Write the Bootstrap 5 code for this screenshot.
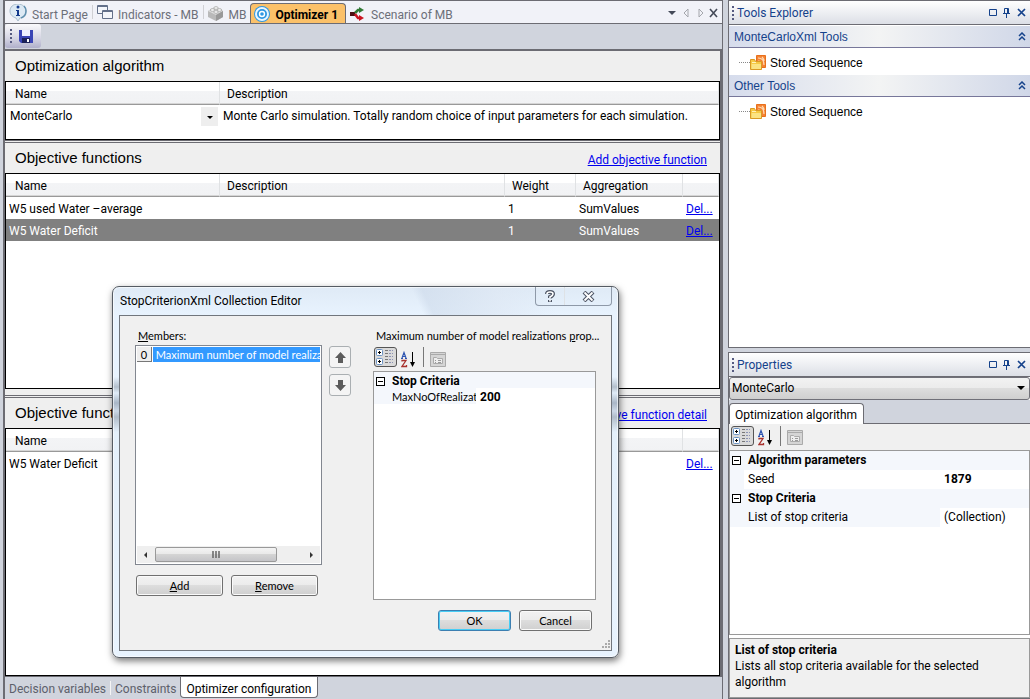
<!DOCTYPE html>
<html lang="en">
<head>
<meta charset="utf-8">
<meta name="viewport" content="width=device-width, initial-scale=1">
<title>Optimizer 1</title>
<link href="https://cdn.jsdelivr.net/npm/bootstrap@5.3.0/dist/css/bootstrap.min.css" rel="stylesheet">
<style>
:root{--ui:Roboto,"Open Sans",sans-serif;--ari:"Liberation Sans",Arial,sans-serif;--edge:#6c6c73;--chrome:#d0d4dd}
html,body{height:100%}
body{font:12px/16px var(--ui);color:#000;background:var(--chrome)}
svg{display:block;flex:none}
button,select{font:inherit;color:inherit;border:0;background:none;padding:0;margin:0}
a{color:#00e;}
.shell{min-height:100vh;position:relative}
.work{border-left:2px solid var(--edge);margin-left:3px;min-width:0}
.side{width:302px;flex:none}
.splitter{width:6px;flex:none;background:var(--chrome);border-left:1px solid var(--edge);box-sizing:border-box}
/* document tabs */
.doctabs{height:24px;background:#f1f2f8;border-top:1px solid var(--edge);border-bottom:1px solid var(--edge);color:#6c6f78}
.doctabs .doc{height:22px;gap:5px;padding:3px 4px 0;white-space:nowrap}
.doctabs .doc>span{padding-top:3px}
.doctabs .split{border-right:1px solid #d0d0d4;height:14px;align-self:center}
.doctabs .doc.on{background:#fbc169;color:#000;font-weight:700;border:1px solid #6c6c73;border-bottom:0;border-radius:4px 4px 0 0;margin-top:2px;height:20px;padding:1px 7px 0 3px}
.doctabs .doc.on>span{padding-top:2px}
.tools{height:27px;border-bottom:2px solid var(--edge);background:var(--chrome)}
.savebar{background:linear-gradient(#fafafc,#d5d5e3 60%,#b0b0cb);border-radius:3px;width:36px;height:24px;padding:0 7px 0 5px}
.grip{width:2px;height:14px;background:repeating-linear-gradient(#555a80 0 2px,transparent 2px 4px)}
/* sections */
.sections{border-right:2px solid var(--edge);background:#efefef}
.sechead{height:30px;padding:0 13px 0 10px}
.sechead h2{font:15px/20px var(--ari);margin:0}
.secrule{height:3px;border:solid var(--edge);border-width:1px 0}
.secrule.wide{margin-top:6px}
.gridbox{border:1px solid #000;background:#fff;overflow:hidden}
.gridbox table{width:100%;table-layout:fixed;border-collapse:separate;border-spacing:0}
.gridbox th{height:23px;font-weight:400;padding:2px 8px 0 7px;border-right:1px solid #e0e2e4;border-bottom:1px solid #999;background:linear-gradient(#fff 40%,#f3f4f6 40%,#f1f2f4);box-shadow:inset 0 -1px #d5d5d5}
.gridbox th:first-child{padding-left:9px}
.gridbox td{height:22px;padding:1px 3px 0;white-space:nowrap;overflow:hidden}
.gridbox tr.sel td{background:#808080;color:#fff}
.gridbox td:last-child{padding-right:0}
.gridbox tr.pick td{padding-top:0}
.gridbox tr.pick td:first-child{padding-right:2px}
.w-name{width:214px}.w-wt{width:71px}.w-ag{width:107px}.w-del{width:36px}
.algo{appearance:none;width:100%;height:20px;padding-left:1px;background:url("data:image/svg+xml,%3Csvg xmlns='http://www.w3.org/2000/svg' width='17' height='19'%3E%3Cpath fill='%23eee' d='M0 0h17v19H0z'/%3E%3Cpath d='M6 9h6l-3 3z'/%3E%3C/svg%3E") no-repeat right center}
.bottabs{height:23px;border-top:1px solid var(--edge);color:#5d606b}
.bottabs button{padding:3px 4px 0;height:21px;white-space:nowrap}
.bottabs button.on{background:#fff;color:#000;border:1px solid var(--edge);border-top:0;border-radius:0 0 4px 4px;padding:3px 6px 0 5px}
.bottabs i{width:1px;height:14px;background:#f5f5f5;margin:4px 0 0}
/* docked panels */
.dock{border:1px solid var(--edge);border-right:0;background:#fff;min-height:0}
.dockhead{height:24px;background:linear-gradient(#fff,#dcdfe6);border-bottom:1px solid var(--edge);padding:1px 4px 0 3px;color:#15428b}
.dockhead .grip{margin-right:3px}
.grouphead{height:22px;padding:1px 4px 0 5px;font:12px/20px var(--ari);color:#15428b;background:linear-gradient(90deg,#d6dcec,#f3f4f4 50%,#d0d7e8);border-bottom:1px solid #77779a}
.leaf{height:27px;padding:2px 0 0 10px;font:12px/20px var(--ari)}
.dots{width:11px;border-top:1px dotted #888}
.objsel{appearance:none;height:23px;border:1px solid #707078;border-radius:3px;padding:0 2px;background:url("data:image/svg+xml,%3Csvg xmlns='http://www.w3.org/2000/svg' width='14' height='8'%3E%3Cpath d='M2 2h8l-4 4z'/%3E%3C/svg%3E") no-repeat right center,linear-gradient(#f2f2f2,#ebebeb 50%,#ddd 50%,#cfcfcf)}
.ptabs{background:var(--chrome);padding-top:3px;border-bottom:1px solid var(--edge)}
.ptabs button{background:#fff;border:1px solid var(--edge);border-bottom:0;border-radius:4px 4px 0 0;padding:3px 6px 1px 5px;height:21px;margin-bottom:-1px}
.pbar{background:#f0f0f0;height:26px;padding:2px 2px 0}
.pbar .cat{border:1px solid #555;border-radius:3px;background:#dadada;width:23px;height:20px;padding:0 1px}
.pbar .rule{width:1px;height:20px;background:#777;margin:0 6px 0 5px}
.pgrid{border:1px solid #999;background:#fff}
.pgrid .r{display:grid;grid-template-columns:14px 1fr 89px;height:19px;line-height:18px}
.pgrid .r>*{padding-left:4px;white-space:nowrap;overflow:hidden}
.pgrid .t{background:#f4f7fc}
.minus{width:9px;height:9px;border:1px solid #000;background:linear-gradient(#000,#000) center/5px 1px no-repeat #fff;padding:0!important;margin:5px 0 0 2px}
.helpbox{border:1px solid #999;background:#f0f0f0;margin-top:3px;height:60px;padding:3px 5px}
/* dialog */
.dlg{position:absolute;left:112px;top:286px;width:507px;height:372px;border:1px solid #555b63;border-radius:7px;padding:0 6px 6px;background:linear-gradient(65deg,transparent 0 60%,#c9d6e780 62%,#dde6f280 76%,transparent 86%) 0 0/100% 29px no-repeat,linear-gradient(#dfeaf6 0,#e8f3fe 28px,#e8f3fe 90px,#b3bfcc 100px,#e0ecf8 106px,#a9b6c6 116px,#ccd8e6 124px,#b0bcc9 130px,#e4f0fb 145px,#e8f3fe);box-shadow:inset 0 0 0 1px #fff9,1px 3px 7px #0008;font:11px/13px Lato,var(--ui)}
.dlgtitle{height:28px;font:12px/28px var(--ui);padding-left:1px}
.caps{border:1px solid #8e99a8;border-top:0;border-radius:0 0 4px 4px;height:19px}
.caps button{height:18px;display:flex;align-items:center;justify-content:center}
.dlgbody{background:#f0f0f0;border:1px solid #71767d;padding:13px 15px 0;position:relative}
.cap{padding:0 0 3px 3px;white-space:nowrap}
.lst{border:1px solid #828790;background:#fff;height:220px;padding:1px}
.lst .it{height:15px;gap:1px;line-height:15px}
.lst .num{background:#eee;border:solid #777;border-width:0 1px 1px 0;width:15px;text-align:center}
.lst .nm{background:#3399ff;color:#fff;overflow:hidden;white-space:nowrap;padding-left:3px}
.sb{height:17px;background:#efefef}
.sb .arrow{width:18px}
.sb .thumb{width:122px;height:15px;border:1px solid #999;border-radius:2px;background:linear-gradient(#f4f4f4,#e8e8e8 50%,#d4d4d4 50%,#c4c4c8)}
.wbtn{border:1px solid #707070;border-radius:3px;height:21px;background:linear-gradient(#f2f2f2,#ebebeb 50%,#ddd 50%,#cfcfcf);box-shadow:inset 0 0 0 1px #fafafa}
.wbtn.def{border-color:#3c7fb1;box-shadow:inset 0 0 0 1px #48cdf5}
.mv{width:22px;height:22px;border:1px solid #aaafb2;border-radius:3px;background:#f4f4f4;display:flex;align-items:center;justify-content:center}
.dlg .pgrid{height:229px}
.dlg .pgrid .r{grid-template-columns:14px 88px 1fr;height:16px;line-height:18px}
.dlg .pgrid .r.fw-bold,.dlg .pgrid .r .fw-bold{font:700 12px/18px var(--ui)}
.dlg .pbar{padding:2px 1px 0}
.sizer{position:absolute;right:1px;bottom:1px}
</style>
</head>
<body>
<svg width="0" height="0" class="position-absolute" aria-hidden="true"><defs>
<g id="cat"><g fill="#fff" stroke="#6b93c4"><rect x=".5" y="1.500" width="6" height="6" rx="1"/><rect x=".5" y="10.500" width="6" height="6" rx="1"/></g><path d="M2 4.500h3M3.500 3v3M2 13.500h3M3.500 12v3" stroke="#000"/><path d="M9 2.500h3M9 5.500h3M9 8.500h3M9 11.500h3M9 14.500h3" stroke="#777"/><path d="M13 2.500h4M13 5.500h4M13 8.500h4M13 11.500h4M13 14.500h4" stroke="#8c93b4" stroke-dasharray="2 1"/></g>
<g id="az"><path d="M0 7.500h2M4 7.500h2M1 7 3 1.500 5 7M1.500 5.500h3" fill="none" stroke="#2f55b0" stroke-width="1.200"/><path d="M1 10.500V9.500H5L1 15.500H5.500V14" fill="none" stroke="#a8322e" stroke-width="1.300"/><path d="M11.500 1v13" stroke="#000"/><path d="M9 11h5l-2.500 5z"/></g>
<g id="page"><path d="M.5.500h15v14H.5z" fill="#d5d5d5" stroke="#aaa"/><path d="M1 2.500h14" stroke="#aaa"/><path d="M3.500 5.500h3l1 1h5v5h-9z" fill="#eee" stroke="#aaa"/><path d="M5 8.500h1M8 8.500h3M5 10.500h1M8 10.500h3" stroke="#999"/></g>
<g id="wins" fill="none" stroke="#15428b"><path d="M.5 2.500h7v6h-7z"/><path d="M15.500 6.500v-5h4v5M14 6.500h7M17.500 7v4M18.500 2v4"/><path d="m29 2 7 7m0-7-7 7" stroke-width="1.700"/></g>
<g id="chev"><path d="m1 4 3-3 3 3M1 8l3-3 3 3" fill="none" stroke="#15428b" stroke-width="1.500"/></g>
<g id="folder"><path d="M6.500.500h9v12h-9z" fill="#f58233" stroke="#e8701c"/><path d="M8 3q6 0 6 7M8 6q3.500 0 3.500 5M12 2q2 2 2 4" fill="none" stroke="#ffd9b0" stroke-width="1.200"/><path d="M.5 4.500h4l1 2h6v8H.5z" fill="#f6c945" stroke="#d99a25"/><path d="M1.500 9h9.500v5h-9.500z" fill="#fbe383"/><path d="M2 7.500h4" stroke="#fff2bd"/></g>
</defs></svg>
<div class="shell d-flex">
  <main class="work d-flex flex-column flex-grow-1">
    <nav class="doctabs d-flex">
      <a href="#" class="doc d-flex text-reset text-decoration-none"><svg width="18" height="18" viewBox="0 0 18 18"><path d="M9 0C4 0 1 3 1 7s3 6 6 7l2 3 2-3c4-1 6-4 6-7s-3-7-8-7z" fill="#dce9f4" stroke="#a9bccb"/><path d="M12 14c3-1 5-4 5-7 0-2-1-4-2-5" fill="none" stroke="#5f8fae" stroke-width="1.500"/><circle cx="9" cy="3" r="1.500" fill="#12398c"/><path d="M7 6h3v5h1v1H7v-1h1V7H7z" fill="#12398c"/></svg><span>Start Page</span></a>
      <span class="split"></span>
      <a href="#" class="doc d-flex text-reset text-decoration-none"><svg width="16" height="18"><g transform="translate(0 1)"><g fill="#f4f6fb" stroke="#63708a"><path d="M.5.500h10v8H.5z"/><path d="M5.500 5.500h10v8h-10z"/></g><path d="M1 1.500h9M6 6.500h9" stroke="#63708a"/></g></svg><span>Indicators - MB</span></a>
      <span class="split"></span>
      <a href="#" class="doc d-flex text-reset text-decoration-none"><svg width="16" height="18"><g transform="translate(0 2)"><path d="M0 5 5 2l3-1 7 4v6l-7 4-8-4z" fill="#b9b9b9"/><path d="m0 5 8 4 7-4-7-4z" fill="#dedede"/><path d="M8 9v6l7-4V5z" fill="#999"/><g fill="#f3f3f3" stroke="#a8a8a8" stroke-width=".8"><ellipse cx="4.500" cy="4" rx="2.200" ry="1.400"/><ellipse cx="8" cy="2" rx="2.200" ry="1.400"/><ellipse cx="8" cy="6" rx="2.200" ry="1.400"/><ellipse cx="11.500" cy="4" rx="2.200" ry="1.400"/></g></g></svg><span>MB</span></a>
      <a href="#" class="doc on d-flex text-decoration-none"><svg width="16" height="17"><g transform="translate(0 1)"><circle cx="8" cy="8" r="8" fill="#2f98e2"/><circle cx="8" cy="8" r="6" fill="none" stroke="#e8f6ff" stroke-width="2"/><circle cx="8" cy="8" r="2.500" fill="none" stroke="#fff" stroke-width="1.400"/></g></svg><span>Optimizer 1</span></a>
      <a href="#" class="doc d-flex text-reset text-decoration-none"><svg width="16" height="18"><g transform="translate(0 3)"><path d="M0 5h5v4H0z" fill="#4b0f12"/><path d="M10 3H8L5 6" fill="none" stroke="#317a35" stroke-width="2.500"/><path d="M9 0l5 3-5 3z" fill="#317a35"/><path d="M5 7l3 4h2" fill="none" stroke="#c91420" stroke-width="2.500"/><path d="M9 8l5 3-5 3z" fill="#c91420"/></g></svg><span>Scenario of MB</span></a>
      <svg width="50" height="12" class="ms-auto me-1 mt-1 align-self-center"><path d="M0 3h8L4 7z" fill="#444a58"/><path d="m20 1-4 4 4 4zM31 1l4 4-4 4z" fill="none" stroke="#a4a6ac"/><path d="m42 1 7 8m0-8-7 8" stroke="#444a58" stroke-width="1.600"/></svg>
    </nav>
    <div class="tools"><div class="savebar d-flex align-items-center justify-content-between"><span class="grip"></span><button type="button" aria-label="Save"><svg width="15" height="15"><path d="M0 1h14v13H2l-2-2z" fill="#3a45b5"/><path d="M3 1h8v6H3z" fill="#eef1ff"/><path d="M3 9h8v5H3z" fill="#1b2158"/><path d="M8 10h2v3H8z" fill="#fff"/></svg></button></div></div>
    <div class="sections d-flex flex-column flex-grow-1">
      <div class="sechead d-flex align-items-center"><h2>Optimization algorithm</h2></div>
      <div class="gridbox" style="height:59px"><table><colgroup><col class="w-name"><col></colgroup>
        <thead><tr><th>Name</th><th>Description</th></tr></thead>
        <tbody><tr class="pick"><td><select class="algo" aria-label="Algorithm"><option>MonteCarlo</option></select></td><td>Monte Carlo simulation. Totally random choice of input parameters for each simulation.</td></tr></tbody></table></div>
      <div class="secrule"></div>
      <div class="sechead d-flex align-items-center justify-content-between"><h2>Objective functions</h2><a href="#" class="pt-1">Add objective function</a></div>
      <div class="gridbox" style="flex:215 0 0"><table><colgroup><col class="w-name"><col><col class="w-wt"><col class="w-ag"><col class="w-del"></colgroup>
        <thead><tr><th>Name</th><th>Description</th><th>Weight</th><th>Aggregation</th><th></th></tr></thead>
        <tbody><tr><td>W5 used Water –average</td><td></td><td>1</td><td>SumValues</td><td><a href="#">Del...</a></td></tr>
        <tr class="sel"><td>W5 Water Deficit</td><td></td><td>1</td><td>SumValues</td><td><a href="#">Del...</a></td></tr></tbody></table></div>
      <div class="secrule wide"></div>
      <div class="sechead d-flex align-items-center justify-content-between"><h2>Objective function details</h2><a href="#" class="pt-1">Add objective function detail</a></div>
      <div class="gridbox" style="flex:247 0 0"><table><colgroup><col class="w-name"><col><col class="w-del"></colgroup>
        <thead><tr><th>Name</th><th>Description</th><th></th></tr></thead>
        <tbody><tr><td>W5 Water Deficit</td><td></td><td><a href="#">Del...</a></td></tr></tbody></table></div>
    </div>
    <div class="bottabs d-flex"><button type="button">Decision variables</button><i></i><button type="button">Constraints</button><button type="button" class="on">Optimizer configuration</button></div>
  </main>
  <div class="splitter"></div>
  <aside class="side d-flex flex-column">
    <section class="dock d-flex flex-column" style="flex:347 0 0">
      <div class="dockhead d-flex align-items-center"><span class="grip"></span><span>Tools Explorer</span><svg class="ms-auto" width="37" height="12"><use href="#wins"/></svg></div>
      <div class="grouphead d-flex align-items-center justify-content-between" style="margin-top:1px"><span>MonteCarloXml Tools</span><svg width="8" height="10"><use href="#chev"/></svg></div>
      <div class="leaf d-flex align-items-center"><span class="dots"></span><svg width="16" height="16"><use href="#folder"/></svg><span class="ps-1">Stored Sequence</span></div>
      <div class="grouphead d-flex align-items-center justify-content-between"><span>Other Tools</span><svg width="8" height="10"><use href="#chev"/></svg></div>
      <div class="leaf d-flex align-items-center"><span class="dots"></span><svg width="16" height="16"><use href="#folder"/></svg><span class="ps-1">Stored Sequence</span></div>
    </section>
    <section class="dock d-flex flex-column mt-1" style="flex:347 0 0">
      <div class="dockhead d-flex align-items-center"><span class="grip"></span><span>Properties</span><svg class="ms-auto" width="37" height="12"><use href="#wins"/></svg></div>
      <select class="objsel" aria-label="Object"><option>MonteCarlo</option></select>
      <div class="ptabs d-flex"><button type="button">Optimization algorithm</button></div>
      <div class="pbar d-flex"><button type="button" class="cat" aria-label="Categorized"><svg width="19" height="18"><use href="#cat"/></svg></button><button type="button" aria-label="Alphabetical" class="ms-1"><svg width="17" height="17"><use href="#az"/></svg></button><span class="rule"></span><button type="button" aria-label="Property pages"><svg width="16" height="15"><use href="#page"/></svg></button></div>
      <div class="pgrid flex-grow-1">
        <div class="r t fw-bold"><span class="minus"></span><span>Algorithm parameters</span></div>
        <div class="r"><span class="t"></span><span>Seed</span><span class="fw-bold">1879</span></div>
        <div class="r t fw-bold"><span class="minus"></span><span>Stop Criteria</span></div>
        <div class="r"><span class="t"></span><span class="t">List of stop criteria</span><span>(Collection)</span></div>
      </div>
      <div class="helpbox"><strong>List of stop criteria</strong><div>Lists all stop criteria available for the selected algorithm</div></div>
    </section>
  </aside>
  <div class="dlg d-flex flex-column" role="dialog" aria-label="StopCriterionXml Collection Editor">
    <div class="dlgtitle d-flex justify-content-between"><span>StopCriterionXml Collection Editor</span>
      <div class="caps d-flex"><button type="button" aria-label="Help" style="width:28px"><svg width="10" height="13"><path d="M2 4q0-2 3-2t3 2q0 1.500-3 3v1M5 10v2" fill="none" stroke="#4e5666" stroke-width="4"/><path d="M2 4q0-2 3-2t3 2q0 1.500-3 3v1M5 10v1.500" fill="none" stroke="#fff" stroke-width="1.600"/></svg></button><button type="button" aria-label="Close" class="border-start" style="width:47px"><svg width="13" height="11"><path d="m2 1 9 9m0-9-9 9" stroke="#4e5666" stroke-width="4"/><path d="m2.500 1.500 8 8m0-8-8 8" stroke="#fff" stroke-width="1.800"/></svg></button></div></div>
    <div class="dlgbody flex-grow-1">
      <div class="d-flex">
        <div class="flex-shrink-0" style="width:187px">
          <div class="cap"><u>M</u>embers:</div>
          <div class="lst d-flex flex-column"><div class="it d-flex"><span class="num">0</span><span class="nm flex-grow-1">Maximum number of model realiza</span></div>
            <div class="sb mt-auto d-flex align-items-center"><svg class="arrow" height="6" viewBox="0 0 18 6"><path d="M10 0v6L7 3z" fill="#333"/></svg><div class="thumb d-flex justify-content-center align-items-center"><svg width="9" height="7"><path d="M1 0v7M4 0v7M7 0v7" stroke="#666" stroke-width="1.500"/></svg></div><svg class="arrow ms-auto" height="6" viewBox="0 0 18 6"><path d="M8 0v6l3-3z" fill="#333"/></svg></div></div>
          <div class="d-flex gap-2" style="padding:10px 4px 0 1px"><button type="button" class="wbtn flex-fill w-50"><u>A</u>dd</button><button type="button" class="wbtn flex-fill w-50"><u>R</u>emove</button></div>
        </div>
        <div class="d-flex flex-column flex-shrink-0" style="padding:17px 22px 0 7px;gap:6px"><button type="button" class="mv" aria-label="Move up"><svg width="11" height="11"><path d="M5.500 0 11 6H8v5H3V6H0z" fill="#5c5c5c"/></svg></button><button type="button" class="mv" aria-label="Move down"><svg width="11" height="11"><path d="M5.500 11 11 5H8V0H3v5H0z" fill="#5c5c5c"/></svg></button></div>
        <div class="flex-grow-1" style="min-width:0">
          <div class="cap">Maximum number of model realizations <u>p</u>rop...</div>
          <div class="pbar d-flex"><button type="button" class="cat" aria-label="Categorized"><svg width="19" height="18"><use href="#cat"/></svg></button><button type="button" aria-label="Alphabetical" class="ms-1"><svg width="17" height="17"><use href="#az"/></svg></button><span class="rule"></span><button type="button" aria-label="Property pages"><svg width="16" height="15"><use href="#page"/></svg></button></div>
          <div class="pgrid"><div class="r t fw-bold"><span class="minus"></span><span>Stop Criteria</span></div><div class="r"><span class="t"></span><span class="t">MaxNoOfRealizat</span><span class="fw-bold">200</span></div></div>
        </div>
      </div>
      <div class="d-flex gap-2 justify-content-end" style="padding:10px 4px 0 0"><button type="button" class="wbtn def" style="width:73px">OK</button><button type="button" class="wbtn" style="width:73px">Cancel</button></div>
      <svg class="sizer" width="9" height="9"><path d="M7 1h2M4 4h5M1 7h8" stroke="#aaa" stroke-width="2" stroke-dasharray="2 1"/></svg>
    </div>
  </div>
</div>
<script src="https://cdn.jsdelivr.net/npm/bootstrap@5.3.0/dist/js/bootstrap.bundle.min.js"></script>
</body>
</html>
